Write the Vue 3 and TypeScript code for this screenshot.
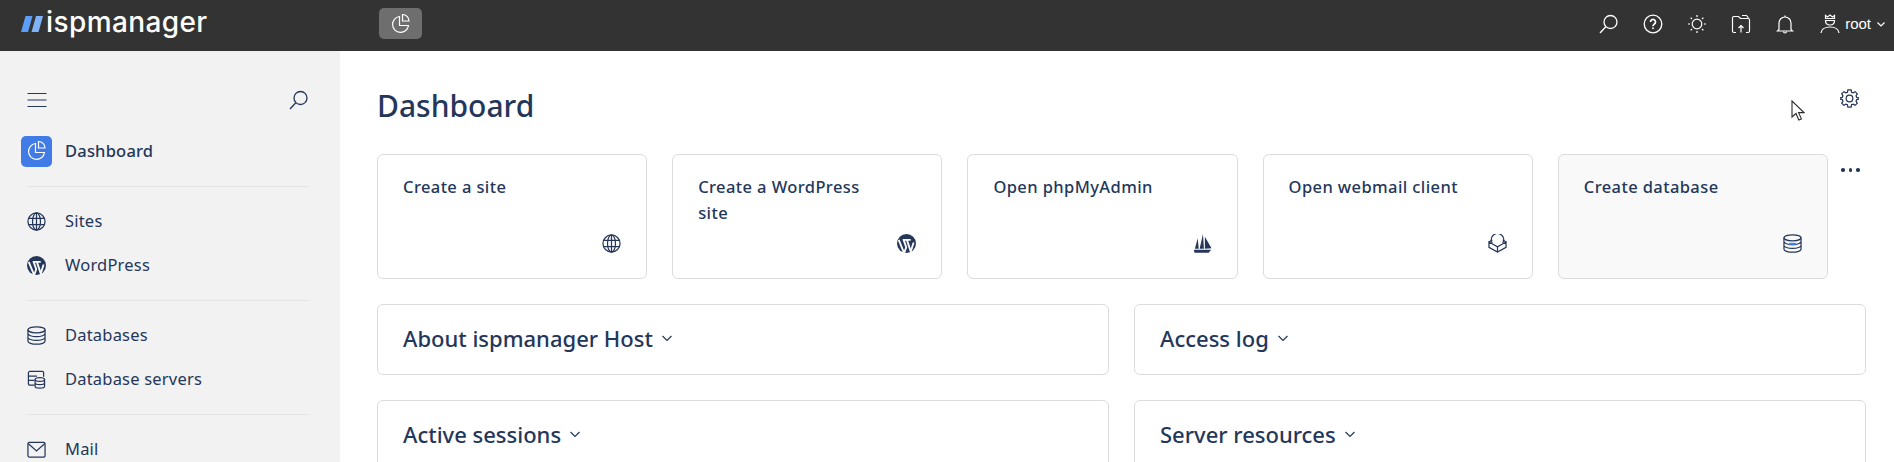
<template>
  <div class="page">
    <header class="topbar">
      <div class="logo">
        <svg class="logo-mark" width="22" height="16" viewBox="0 0 22 16"><path d="M4.500 0H11.500L7 16H0Z" fill="#5c9df5"/><path d="M15 0H22L17.500 16H10.500Z" fill="#7fb2f7"/></svg>
        <span class="logo-text">ispmanager</span>
      </div>
      <div class="pinned">
        <svg width="22" height="22" viewBox="0 0 22 22" fill="none" stroke="#fff" stroke-width="1.2"><path d="M9.500 3.500a8 8 0 1 0 9 9h-9z"/><path d="M12.500 1.500v6.500h6.500a6.500 6.500 0 0 0-6.500-6.500z"/></svg>
      </div>
      <div class="top-actions">
        <svg class="ti" viewBox="0 0 20 20" fill="none" stroke="#fff" stroke-width="1.3"><circle cx="11.500" cy="8" r="6.500"/><path d="M6.800 12.700L1 19"/></svg>
        <svg class="ti" viewBox="0 0 20 20" fill="none" stroke="#fff" stroke-width="1.3"><circle cx="10" cy="10" r="8.800"/><path d="M7.500 8a2.500 2.500 0 1 1 3.800 2.100c-.9.600-1.300 1-1.300 2.100" stroke-width="1.700"/><path d="M10 13.500v1.500" stroke-width="1.700"/></svg>
        <svg class="ti" viewBox="0 0 20 20" fill="none" stroke="#fff" stroke-width="1.2"><circle cx="10" cy="10" r="4.800"/><path d="M10 1v2M10 17v2M1 10h2M17 10h2M3.600 3.600L5 5M15 15l1.400 1.400M3.600 16.400L5 15M15 5l1.400-1.400"/></svg>
        <svg class="ti" viewBox="0 0 20 20" fill="none" stroke="#fff" stroke-width="1.2"><path d="M5 18.500H3a1.500 1.500 0 0 1-1.500-1.500V4A1.500 1.500 0 0 1 3 2.500h4.500L9.500 4.500H17A1.500 1.500 0 0 1 18.500 6v11a1.500 1.500 0 0 1-1.500 1.500h-2"/><path d="M10 18.500v-7M7.500 14L10 11.500l2.500 2.500"/><path d="M11 1.500h4.500l2 2.500"/></svg>
        <svg class="ti" viewBox="0 0 20 20" fill="none" stroke="#fff" stroke-width="1.2"><path d="M4 15.500V9a6 6 0 0 1 12 0v6.500l1.500 1.500h-15z"/><path d="M10 3V1.500M8.500 17.500a1.500 1.500 0 0 0 3 0"/></svg>
        <div class="user">
          <svg width="20" height="20" viewBox="0 0 20 20" fill="none" stroke="#fff" stroke-width="1.2"><path d="M5.500 4.500V1.500l2 1.500L10 1l2.500 2 2-1.500v3z"/><path d="M5.500 6.500c0 2.800 2 4.500 4.500 4.500s4.500-1.700 4.500-4.500z"/><path d="M1 19c.6-4 4-6 9-6s8.400 2 9 6"/></svg>
          <span class="user-name">root</span>
          <svg width="10" height="10" viewBox="0 0 10 10" fill="none" stroke="#fff" stroke-width="1.2"><path d="M1.500 3.500L5 7l3.500-3.500"/></svg>
        </div>
      </div>
    </header>

    <div class="body">
      <aside class="sidebar">
        <div class="side-tools">
          <svg width="20" height="20" viewBox="0 0 20 20" fill="none" stroke="#24375a" stroke-width="1.2"><path d="M.500 3.500h19M.500 10h19M.500 16.500h19"/></svg>
          <svg width="20" height="20" viewBox="0 0 20 20" fill="none" stroke="#24375a" stroke-width="1.3"><circle cx="11.500" cy="8" r="6.500"/><path d="M6.800 12.700L1 19"/></svg>
        </div>
        <nav class="nav">
          <template v-for="(group, i) in nav" :key="i">
            <div v-if="i" class="nav-sep"></div>
            <div v-for="item in group" :key="item.label" class="nav-row">
              <span v-if="item.active" class="nav-active">
                <svg width="22" height="22" viewBox="0 0 22 22" fill="none" stroke="#fff" stroke-width="1.2"><path d="M9.500 3.500a8 8 0 1 0 9 9h-9z"/><path d="M12.500 1.500v6.500h6.500a6.500 6.500 0 0 0-6.500-6.500z"/></svg>
              </span>
              <svg v-else class="nav-icon" viewBox="0 0 20 20" fill="none" stroke="#24375a" stroke-width="1.3" v-html="icons[item.icon]"></svg>
              <span class="nav-label" :class="{ strong: item.active }">{{ item.label }}</span>
            </div>
          </template>
        </nav>
      </aside>

      <main class="content">
        <div class="head">
          <h1>Dashboard</h1>
          <svg class="gear" width="19" height="19" viewBox="0 0 20 20" fill="none" stroke="#24375a" stroke-width="1.3"><circle cx="10" cy="10" r="3.500"/><path d="M8.300 1h3.400l.5 2.400 1.600.7 2.100-1.300 2.300 2.300-1.300 2.100.7 1.600 2.400.5v1.400l-2.400.5-.7 1.600 1.300 2.100-2.300 2.300-2.100-1.300-1.600.7-.5 2.400H8.300l-.5-2.400-1.600-.7-2.100 1.300-2.300-2.300 1.300-2.100-.7-1.600L0 10.700V9.300l2.400-.5.700-1.600-1.300-2.100 2.300-2.300 2.100 1.300 1.600-.7z"/></svg>
        </div>

        <div class="actions-wrap">
          <div class="actions">
            <a v-for="card in cards" :key="card.label" class="action" :class="{ hover: card.hover }">
              <span class="action-label">{{ card.label }}</span>
              <svg class="action-icon" viewBox="0 0 20 20" fill="none" stroke="#24375a" stroke-width="1.3" v-html="icons[card.icon]"></svg>
            </a>
          </div>
          <span class="more"><i></i><i></i><i></i></span>
        </div>

        <div class="panels">
          <section v-for="title in panels" :key="title" class="panel">
            <h2>{{ title }}</h2>
            <svg width="12" height="12" viewBox="0 0 12 12" fill="none" stroke="#24375a" stroke-width="1.2"><path d="M1.500 4L6 8.500 10.500 4"/></svg>
          </section>
        </div>
      </main>

      <svg class="cursor" width="14" height="22" viewBox="0 0 14 22"><path d="M1 1v16l4-3.500 2.800 6.500 2.600-1.100-2.800-6.300H13z" fill="#fff" stroke="#2b2b2b" stroke-width="1.100"/></svg>
    </div>
  </div>
</template>

<script setup lang="ts">
interface NavItem {
  label: string
  icon: string
  active?: boolean
}

const icons: Record<string, string> = {
  globe:
    '<circle cx="10" cy="10" r="9"/><ellipse cx="10" cy="10" rx="4.200" ry="9"/><path d="M10 1v18M1.800 6.800h16.400M1.800 13.200h16.400"/>',
  wp: '<circle cx="10" cy="10" r="10" fill="#24375a" stroke="none"/><path d="M1.800 6.200L7.500 20l2.200-6-2.700-7.800M6 6.200h8.500M10.500 6.500l4 12 3-9.500" fill="none" stroke="#f8f8f8" stroke-width="2"/>',
  db: '<ellipse cx="10" cy="4" rx="9" ry="3.200"/><path d="M1 4v12c0 1.700 4 3.200 9 3.200s9-1.500 9-3.200V4M1 8c0 1.700 4 3.200 9 3.200s9-1.500 9-3.200M1 12c0 1.700 4 3.200 9 3.200s9-1.500 9-3.200"/>',
  dbs: '<path d="M8 16H3a1.500 1.500 0 0 1-1.500-1.500V3A1.500 1.500 0 0 1 3 1.500h13A1.500 1.500 0 0 1 17.500 3v4M1.500 6.500h9M1.500 11h6"/><ellipse cx="13.500" cy="10" rx="5" ry="2"/><path d="M8.500 10v7c0 1.100 2.200 2 5 2s5-.9 5-2v-7M8.500 13.500c0 1.100 2.200 2 5 2s5-.9 5-2"/>',
  mail: '<rect x="1" y="2.500" width="18" height="15.500" rx="1.500"/><path d="M1.500 4L10 11.500 18.500 4"/>',
  sail: '<path d="M1 16.500h18l-2.500 3.300H1.500z" fill="#24375a" stroke="none"/><path d="M2 15.500L5 4.500 6 15.500zM7 15.500L10.500 0 11.500 15.500zM12.500 15.500L12.500 3 19.500 15z" fill="#24375a" stroke="none"/>',
  mailbox: '<path d="M4.500 9.500a6.500 6.500 0 1 1 11 0"/><path d="M1 8.500l9 5 9-5V14l-9 5-9-5z"/><path d="M1 8.500L4.500 6M19 8.500L15.500 6M10 13.500V19"/>',
  dbh: '<ellipse cx="10" cy="4" rx="9" ry="3.200"/><path d="M1 4v12c0 1.700 4 3.200 9 3.200s9-1.500 9-3.200V4M1 8c0 1.700 4 3.200 9 3.200s9-1.500 9-3.200M1 12c0 1.700 4 3.200 9 3.200s9-1.500 9-3.200"/><path d="M6.500 9.300h7v2.500h-7z" fill="#3f7de8" stroke="none"/>'
}

const nav: NavItem[][] = [
  [{ label: "Dashboard", icon: "", active: true }],
  [
    { label: "Sites", icon: "globe" },
    { label: "WordPress", icon: "wp" }
  ],
  [
    { label: "Databases", icon: "db" },
    { label: "Database servers", icon: "dbs" }
  ],
  [{ label: "Mail", icon: "mail" }]
]

const cards = [
  { label: "Create a site", icon: "globe" },
  { label: "Create a WordPress site", icon: "wp" },
  { label: "Open phpMyAdmin", icon: "sail" },
  { label: "Open webmail client", icon: "mailbox" },
  { label: "Create database", icon: "dbh", hover: true }
]

const panels = ["About ispmanager Host", "Access log", "Active sessions", "Server resources"]
</script>

<style>
html,
body {
  margin: 0;
  height: 100%;
  overflow: hidden;
  background: #fff;
}
</style>

<style scoped>
.page {
  width: 1894px;
  height: 462px;
  overflow: hidden;
  display: flex;
  flex-direction: column;
  font-family: "Noto Sans", "Open Sans", sans-serif;
  color: #24375a;
}
.topbar {
  height: 51px;
  flex: none;
  background: #333;
  display: flex;
  align-items: center;
  padding-left: 21px;
}
.logo {
  width: 358px;
  display: flex;
  align-items: center;
  gap: 3px;
}
.logo-mark {
  margin-top: -3px;
}
.logo-text {
  font-family: Inter, sans-serif;
  font-size: 28px;
  font-weight: 500;
  letter-spacing: 0.4px;
  line-height: 40px;
  color: #fff;
  position: relative;
  top: -4px;
}
.pinned {
  width: 43px;
  height: 31px;
  border-radius: 5px;
  background: #6e6e6e;
  display: flex;
  align-items: center;
  justify-content: center;
  margin-bottom: 4px;
}
.top-actions {
  margin-left: auto;
  display: flex;
  align-items: center;
  gap: 24px;
  padding: 0 8px 4px 0;
}
.ti {
  width: 20px;
  height: 20px;
}
.user {
  display: flex;
  align-items: center;
  gap: 5px;
  margin-left: 1px;
}
.user-name {
  font-family: "Liberation Sans", Arial, sans-serif;
  font-size: 15px;
  color: #fff;
}
.body {
  flex: 1;
  display: flex;
  position: relative;
  min-height: 0;
}
.sidebar {
  width: 340px;
  flex: none;
  box-sizing: border-box;
  background: #f2f2f2;
  padding: 39px 21px 0;
}
.side-tools {
  display: flex;
  justify-content: space-between;
  align-items: center;
  padding: 0 10px 0 6px;
  height: 20px;
}
.nav {
  margin-top: 19px;
}
.nav-row {
  height: 44px;
  display: flex;
  align-items: center;
  gap: 13px;
}
.nav-row svg.nav-icon {
  width: 19px;
  height: 19px;
  margin: 0 6px;
  flex: none;
}
.nav-active {
  width: 31px;
  height: 31px;
  border-radius: 5px;
  background: #407be6;
  display: flex;
  align-items: center;
  justify-content: center;
  flex: none;
  margin-right: 0;
}
.nav-label {
  font-size: 16.5px;
  letter-spacing: 0.2px;
  line-height: 24px;
}
.nav-label.strong {
  font-weight: 500;
}
.nav-sep {
  height: 1px;
  background: #e4e4e4;
  margin: 13px 10px 12px 6px;
}
.content {
  flex: 1;
  min-width: 0;
  box-sizing: border-box;
  padding: 0 28px 0 37px;
}
.head {
  height: 103px;
  display: flex;
  align-items: center;
  justify-content: space-between;
  padding-right: 7px;
}
h1 {
  margin: 0;
  font-size: 30px;
  font-weight: 500;
  line-height: 40px;
  position: relative;
  top: 3px;
}
.gear {
  position: relative;
  top: -4px;
}
.actions-wrap {
  display: flex;
  gap: 13px;
}
.actions {
  flex: 1;
  display: grid;
  grid-template-columns: repeat(5, 1fr);
  gap: 25px;
}
.action {
  height: 125px;
  box-sizing: border-box;
  border: 1px solid #dcdcdc;
  border-radius: 6px;
  padding: 19px 25px;
  position: relative;
}
.action.hover {
  background: #f9f9f9;
}
.action-label {
  display: block;
  max-width: 180px;
  font-size: 16.5px;
  font-weight: 500;
  letter-spacing: 0.4px;
  line-height: 26px;
}
.action-icon {
  position: absolute;
  right: 25px;
  bottom: 25px;
  width: 19px;
  height: 19px;
}
.more {
  width: 25px;
  display: flex;
  gap: 4px;
  align-self: flex-start;
  margin-top: 14px;
}
.more i {
  width: 3.500px;
  height: 3.500px;
  border-radius: 50%;
  background: #24375a;
}
.panels {
  margin-top: 25px;
  display: grid;
  grid-template-columns: 1fr 1fr;
  gap: 25px;
}
.panel {
  height: 71px;
  box-sizing: border-box;
  border: 1px solid #dcdcdc;
  border-radius: 6px;
  padding: 0 26px 3px 25px;
  display: flex;
  align-items: center;
  gap: 8px;
}
h2 {
  margin: 0;
  font-size: 22px;
  font-weight: 500;
  line-height: 30px;
}
.cursor {
  position: absolute;
  left: 1791px;
  top: 49px;
}
</style>
